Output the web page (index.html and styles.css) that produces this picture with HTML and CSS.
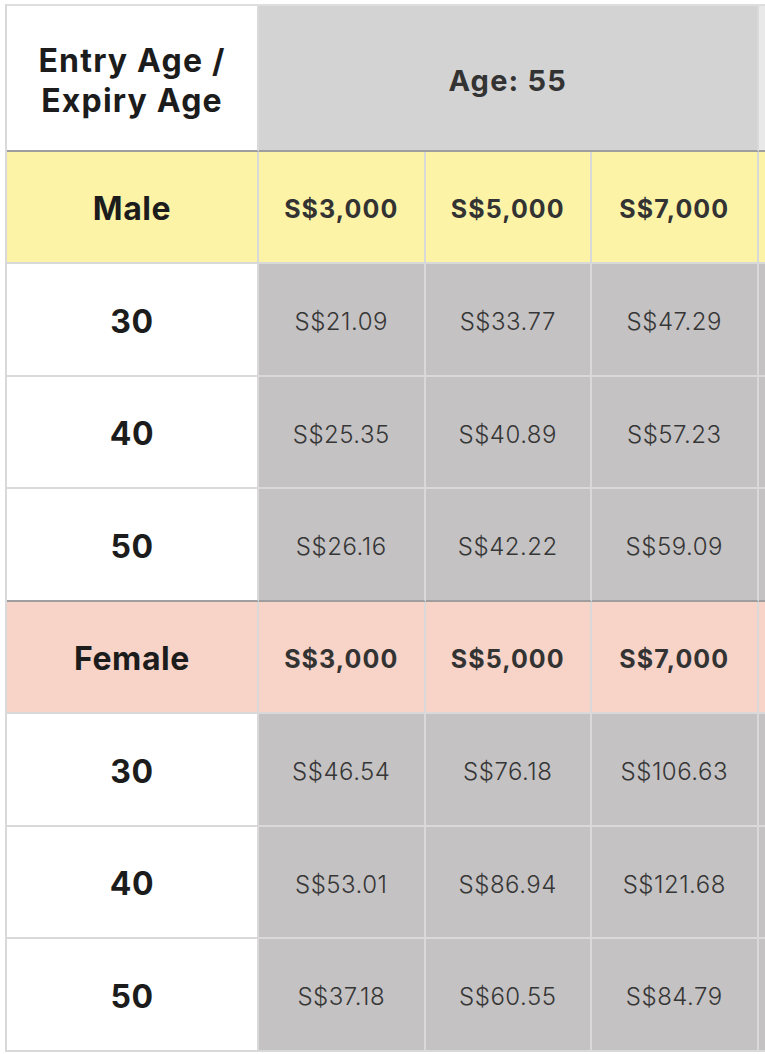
FILE: index.html
```html
<!DOCTYPE html>
<html lang="en">
<head>
<meta charset="utf-8">
<title>Premium table</title>
<link rel="stylesheet" href="styles.css">
</head>
<body>
<div class="wrap">
<table class="rates">
  <thead>
    <tr class="head">
      <th class="label">Entry Age /<br>Expiry Age</th>
      <th class="age" colspan="3">Age: 55</th>
      <th class="age next"></th>
    </tr>
  </thead>
  <tbody>
    <tr class="male">
      <th class="label">Male</th>
      <td class="sum">S$3,000</td><td class="sum">S$5,000</td><td class="sum">S$7,000</td><td class="sum"></td>
    </tr>
    <tr><th class="label">30</th><td>S$21.09</td><td>S$33.77</td><td>S$47.29</td><td></td></tr>
    <tr><th class="label">40</th><td>S$25.35</td><td>S$40.89</td><td>S$57.23</td><td></td></tr>
    <tr class="split"><th class="label">50</th><td>S$26.16</td><td>S$42.22</td><td>S$59.09</td><td></td></tr>
    <tr class="female">
      <th class="label">Female</th>
      <td class="sum">S$3,000</td><td class="sum">S$5,000</td><td class="sum">S$7,000</td><td class="sum"></td>
    </tr>
    <tr><th class="label">30</th><td>S$46.54</td><td>S$76.18</td><td>S$106.63</td><td></td></tr>
    <tr><th class="label">40</th><td>S$53.01</td><td>S$86.94</td><td>S$121.68</td><td></td></tr>
    <tr><th class="label">50</th><td>S$37.18</td><td>S$60.55</td><td>S$84.79</td><td></td></tr>
  </tbody>
</table>
</div>
</body>
</html>
```

FILE: styles.css
```css
html, body {
  margin: 0;
  padding: 0;
  background: #ffffff;
}

.wrap {
  width: 765px;
  height: 1054px;
  overflow: hidden;
  padding: 4px 0 0 5px;
  box-sizing: border-box;
}

.rates {
  border-collapse: separate;
  border-spacing: 0;
  border-left: 2px solid #d9d9d9;
  border-top: 2px solid #dedede;
  table-layout: fixed;
  width: 920px;
  font-family: "Inter", "Liberation Sans", sans-serif;
}

.rates th,
.rates td {
  padding: 4px 0 0 0;
  text-align: center;
  vertical-align: middle;
  border-right: 2px solid #d9d9d9;
  border-bottom: 2px solid #d9d9d9;
  box-sizing: border-box;
}

.rates tbody tr { height: 112px; }
.rates tbody tr:nth-child(even) { height: 113px; }

.head { height: 146px; }

.head th {
  border-bottom: 2px solid #9e9e9e;
}

.label {
  width: 252px;
  background: #ffffff;
  color: #1c1c1c;
  font-weight: 700;
  font-size: 32px;
  line-height: 40px;
  letter-spacing: 0.6px;
}

.head .label {
  font-size: 32px;
  letter-spacing: 1.2px;
  padding-top: 6px;
}

.age {
  background: #d3d3d3;
  color: #333333;
  font-weight: 700;
  font-size: 29px;
  letter-spacing: 1.2px;
}

.age.next {
  background: #e9e9e9;
}

.rates td {
  width: 166px;
  background: #c4c2c3;
  color: #363636;
  font-size: 24px;
  font-weight: 300;
  letter-spacing: 0.5px;
}

.male .sum,
.male .label {
  background: #fdf3a7;
}

.female .sum,
.female .label {
  background: #f7d3c8;
}

.rates td.sum {
  color: #333333;
  font-weight: 700;
  font-size: 25px;
  letter-spacing: 1.1px;
}

.split th,
.split td {
  border-bottom-color: #9e9e9e;
}
```
